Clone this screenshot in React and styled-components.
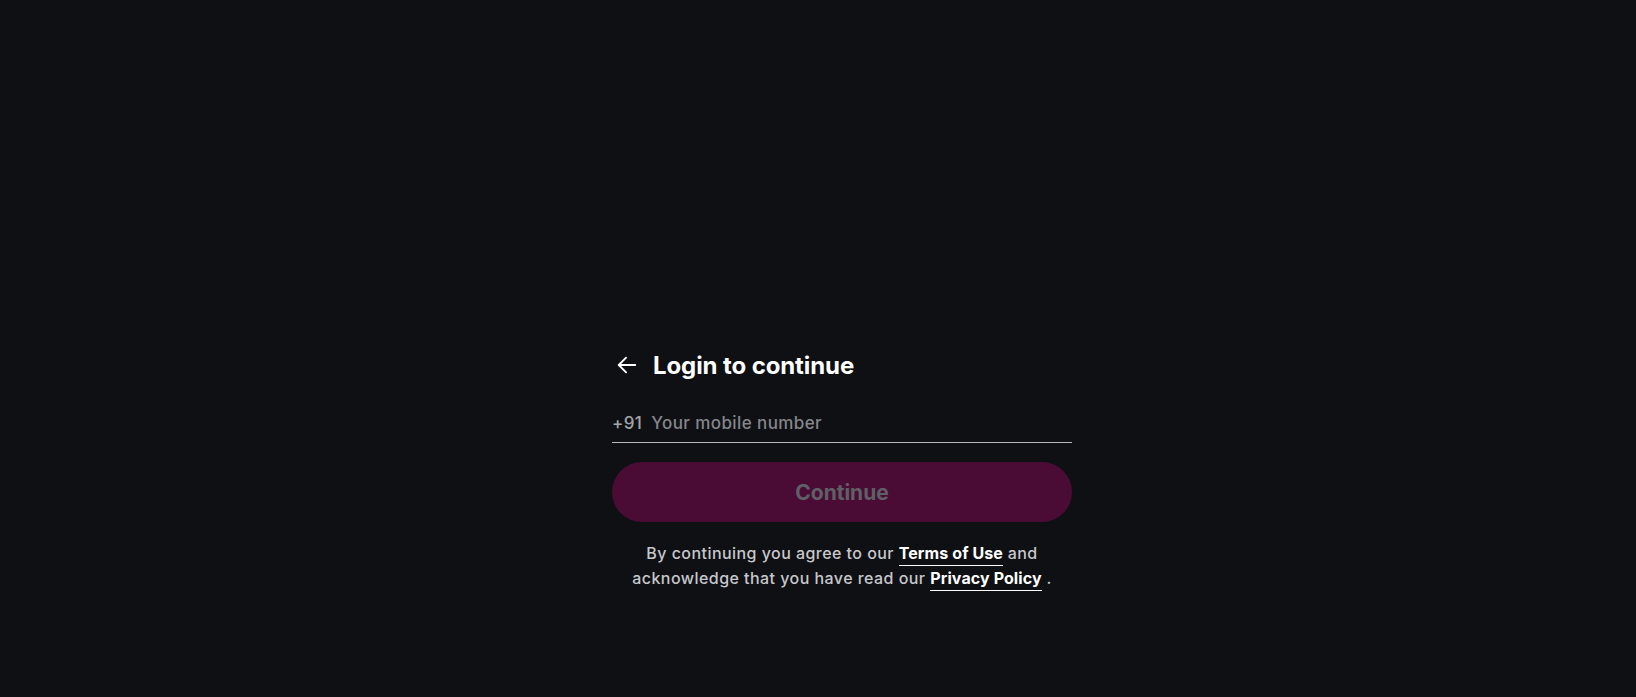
import React from "react";
import styled, { createGlobalStyle } from "styled-components";

const GlobalStyle = createGlobalStyle`
  html, body {
    margin: 0;
    padding: 0;
    background: #0f1014;
  }
  body {
    font-family: Inter, "Noto Sans", sans-serif;
    -webkit-font-smoothing: antialiased;
  }
`;

const Page = styled.div`
  min-height: 697px;
  display: flex;
  justify-content: center;
  align-items: flex-start;
  padding-left: 48px;
  padding-top: 349px;
  box-sizing: border-box;
  background: #0f1014;
`;

const Panel = styled.div`
  width: 460px;
  display: flex;
  flex-direction: column;
`;

const Header = styled.div`
  display: flex;
  align-items: center;
  gap: 14px;
  height: 32px;
  padding-left: 3px;
`;

const BackButton = styled.button`
  background: none;
  border: 0;
  padding: 0;
  width: 24px;
  height: 24px;
  display: flex;
  align-items: center;
  justify-content: center;
  color: #fff;
  cursor: pointer;
`;

const Title = styled.h1`
  margin: 0;
  font-size: 24px;
  font-weight: 700;
  color: #fff;
  letter-spacing: -0.1px;
`;

const Field = styled.label`
  display: flex;
  align-items: center;
  gap: 9px;
  margin-top: 32px;
  padding-bottom: 9px;
  border-bottom: 1px solid #b8b9bc;
  font-size: 17px;
  letter-spacing: 0.4px;
`;

const Prefix = styled.span`
  color: #a4a5a8;
  font-weight: 500;
`;

const Input = styled.input`
  flex: 1;
  background: transparent;
  border: 0;
  outline: none;
  padding: 0;
  font: inherit;
  font-weight: 500;
  letter-spacing: inherit;
  color: #fff;
  &::placeholder {
    color: #85868a;
  }
`;

const Submit = styled.button`
  margin-top: 19px;
  height: 60px;
  border: 0;
  border-radius: 30px;
  background: #4a0c35;
  color: #5f6066;
  font-family: inherit;
  font-size: 21px;
  font-weight: 700;
  cursor: not-allowed;
`;

const Terms = styled.p`
  margin: 19px 0 0;
  text-align: center;
  font-size: 16px;
  line-height: 25px;
  letter-spacing: 0.45px;
  font-weight: 500;
  color: #c7c8cc;
`;

const Link = styled.a`
  color: #fff;
  font-weight: 700;
  letter-spacing: 0.1px;
  text-decoration: none;
  border-bottom: 1px solid #fff;
  padding-bottom: 2px;
`;

export default function App() {
  return (
    <>
      <GlobalStyle />
      <Page>
        <Panel>
          <Header>
            <BackButton aria-label="Back">
              <svg width="22" height="22" viewBox="0 0 24 24" fill="none" stroke="currentColor" strokeWidth="2" strokeLinecap="round" strokeLinejoin="round">
                <path d="M21 12H3" />
                <path d="M11 4l-8 8 8 8" />
              </svg>
            </BackButton>
            <Title>Login to continue</Title>
          </Header>
          <Field>
            <Prefix>+91</Prefix>
            <Input type="tel" placeholder="Your mobile number" />
          </Field>
          <Submit disabled>Continue</Submit>
          <Terms>
            By continuing you agree to our <Link href="#">Terms of Use</Link> and
            <br />
            acknowledge that you have read our <Link href="#">Privacy Policy</Link> .
          </Terms>
        </Panel>
      </Page>
    </>
  );
}
